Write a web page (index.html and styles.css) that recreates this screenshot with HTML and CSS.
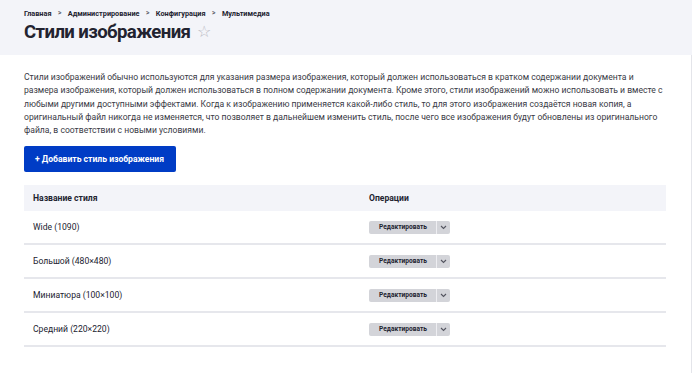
FILE: index.html
```html
<!DOCTYPE html>
<html lang="ru">
<head>
<meta charset="utf-8">
<title>Стили изображения</title>
<link rel="stylesheet" href="styles.css">
</head>
<body>
<div class="page">
  <header class="head">
    <nav class="crumbs">
      <a>Главная</a><span class="sep">&gt;</span>
      <a>Администрирование</a><span class="sep">&gt;</span>
      <a>Конфигурация</a><span class="sep">&gt;</span>
      <a>Мультимедиа</a>
    </nav>
    <h1 class="title">Стили изображения <span class="star">☆</span></h1>
  </header>
  <main class="content">
    <p class="desc">Стили изображений обычно используются для указания размера изображения, который должен использоваться в кратком содержании документа и размера изображения, который должен использоваться в полном содержании документа. Кроме этого, стили изображений можно использовать и вместе с любыми другими доступными эффектами. Когда к изображению применяется какой-либо стиль, то для этого изображения создаётся новая копия, а оригинальный файл никогда не изменяется, что позволяет в дальнейшем изменить стиль, после чего все изображения будут обновлены из оригинального файла, в соответствии с новыми условиями.</p>
    <div class="actions"><a class="btn-primary">+ Добавить стиль изображения</a></div>
    <table class="tbl">
      <thead>
        <tr><th class="c1">Название стиля</th><th>Операции</th></tr>
      </thead>
      <tbody>
        <tr><td class="c1">Wide (1090)</td><td><span class="ops"><span class="edit">Редактировать</span><span class="tog"><svg width="7" height="5" viewBox="0 0 7 5"><path d="M1 1 L3.5 3.5 L6 1" fill="none" stroke="#545560" stroke-width="1.1"/></svg></span></span></td></tr>
        <tr><td class="c1">Большой (480×480)</td><td><span class="ops"><span class="edit">Редактировать</span><span class="tog"><svg width="7" height="5" viewBox="0 0 7 5"><path d="M1 1 L3.5 3.5 L6 1" fill="none" stroke="#545560" stroke-width="1.1"/></svg></span></span></td></tr>
        <tr><td class="c1">Миниатюра (100×100)</td><td><span class="ops"><span class="edit">Редактировать</span><span class="tog"><svg width="7" height="5" viewBox="0 0 7 5"><path d="M1 1 L3.5 3.5 L6 1" fill="none" stroke="#545560" stroke-width="1.1"/></svg></span></span></td></tr>
        <tr><td class="c1">Средний (220×220)</td><td><span class="ops"><span class="edit">Редактировать</span><span class="tog"><svg width="7" height="5" viewBox="0 0 7 5"><path d="M1 1 L3.5 3.5 L6 1" fill="none" stroke="#545560" stroke-width="1.1"/></svg></span></span></td></tr>
      </tbody>
    </table>
  </main>
</div>
</body>
</html>
```
FILE: styles.css
```css
html, body {
  margin: 0;
  padding: 0;
  background: #fff;
}
body {
  font-family: Roboto, "Liberation Sans", sans-serif;
  color: #222330;
  width: 692px;
  height: 373px;
  overflow: hidden;
}
.page {
  display: flex;
  flex-direction: column;
  height: 373px;
  width: 692px;
}
.head {
  background: #f3f4f9;
  padding: 9px 24px 0 24px;
  height: 55px;
  box-sizing: border-box;
  flex: none;
}
.crumbs {
  font-size: 7.3px;
  font-weight: 700;
  color: #222330;
  line-height: 9px;
  display: flex;
  align-items: center;
}
.crumbs .sep {
  margin: 0 6.5px;
  font-weight: 700;
  font-size: 6.5px;
  color: #545560;
}
.title {
  margin: 3px 0 0 0;
  font-size: 18.6px;
  font-weight: 700;
  line-height: 22px;
  color: #222330;
  letter-spacing: -0.6px;
}
.star {
  font-weight: 400;
  font-size: 16px;
  color: #b8b9c2;
  margin-left: 3px;
  letter-spacing: 0;
  position: relative;
  top: -1px;
}
.content {
  flex: 1;
  padding: 0 24px;
  border-right: 1px solid #e4e5ea;
}
.desc {
  margin: 16px 0 0 0;
  font-size: 8.6px;
  line-height: 13.3px;
  color: #393a45;
  width: 645px;
}
.actions {
  display: flex;
  margin-top: 9px;
}
.btn-primary {
  display: block;
  background: #003cc5;
  color: #fff;
  font-size: 8.6px;
  font-weight: 700;
  height: 26px;
  line-height: 26px;
  padding: 0 12px 0 11px;
  border-radius: 2px;
  white-space: nowrap;
}
.tbl {
  margin-top: 13px;
  width: 642px;
  border-collapse: collapse;
  font-size: 8.6px;
}
.tbl th {
  background: #f3f4f9;
  text-align: left;
  font-weight: 700;
  height: 26px;
  padding: 0 9px;
  color: #222330;
}
.tbl th.c1, .tbl td.c1 {
  width: 318px;
}
.tbl td {
  height: 32px;
  padding: 0 9px;
  border-bottom: 2px solid #e6e7ec;
  color: #222330;
}
.ops {
  display: inline-flex;
  height: 13px;
  background: #d3d4d9;
  border-radius: 2px;
  vertical-align: middle;
}
.edit {
  font-size: 6.6px;
  font-weight: 700;
  color: #222330;
  line-height: 13px;
  padding: 0 0 0 10px;
  width: 67px;
  box-sizing: border-box;
}
.tog {
  width: 13px;
  border-left: 1px solid #eeeef2;
  display: flex;
  align-items: center;
  justify-content: center;
}
```
